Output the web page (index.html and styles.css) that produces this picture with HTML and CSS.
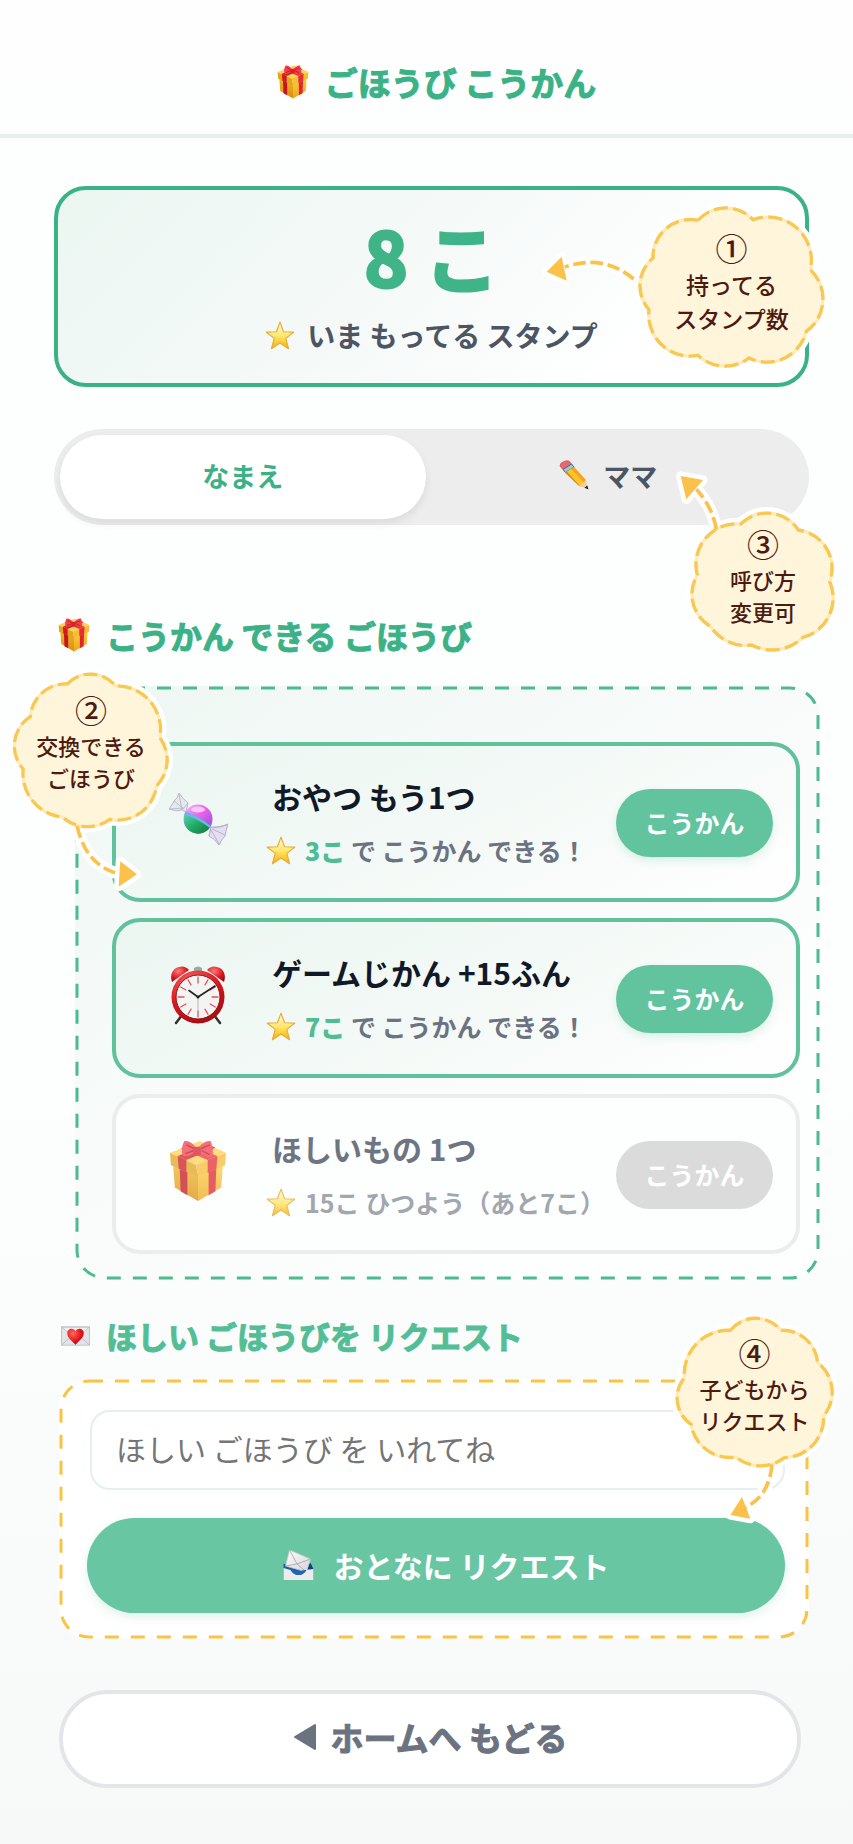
FILE: index.html
```html
<!DOCTYPE html>
<html lang="ja">
<head>
<meta charset="utf-8">
<meta name="viewport" content="width=device-width, initial-scale=1">
<title>ごほうび こうかん</title>
<link rel="stylesheet" href="styles.css">
</head>
<body>
<svg class="defs" aria-hidden="true">
  <defs>
    <linearGradient id="gold" x1="0" y1="0" x2="0" y2="1"><stop offset="0" stop-color="#fffbd8"/><stop offset=".5" stop-color="#ffe96e"/><stop offset="1" stop-color="#f8b000"/></linearGradient>
    <linearGradient id="boxL" x1="0" y1="0" x2="0" y2="1"><stop offset="0" stop-color="#f0b92b"/><stop offset="1" stop-color="#d98f10"/></linearGradient>
    <linearGradient id="boxR" x1="0" y1="0" x2="0" y2="1"><stop offset="0" stop-color="#ffd347"/><stop offset="1" stop-color="#eea51b"/></linearGradient>
    <linearGradient id="candyTop" x1="0" y1="0" x2="1" y2="1"><stop offset="0" stop-color="#ffb6ff"/><stop offset=".45" stop-color="#ec62ea"/><stop offset="1" stop-color="#7b4be0"/></linearGradient>
    <linearGradient id="candyLow" x1="0" y1="0" x2="1" y2="1"><stop offset="0" stop-color="#5fd6c8"/><stop offset=".5" stop-color="#1fae62"/><stop offset="1" stop-color="#18713f"/></linearGradient>
    <radialGradient id="bell" cx=".4" cy=".3" r=".8"><stop offset="0" stop-color="#ff7a7a"/><stop offset=".6" stop-color="#d9161c"/><stop offset="1" stop-color="#8e0a10"/></radialGradient>
    <linearGradient id="paper" x1="0" y1="0" x2="1" y2="1"><stop offset="0" stop-color="#ffffff"/><stop offset="1" stop-color="#d3d3d6"/></linearGradient>
    <radialGradient id="heart" cx=".35" cy=".3" r=".8"><stop offset="0" stop-color="#ff6a5e"/><stop offset=".6" stop-color="#e2141a"/><stop offset="1" stop-color="#a90a12"/></radialGradient>
    <symbol id="gift" viewBox="0 0 60 64">
      <path d="M4 22 30 34V63L6 49Z" fill="url(#boxL)"/>
      <path d="M56 22 30 34V63L54 49Z" fill="url(#boxR)"/>
      <path d="M11 26 19 30V57L12 53Z" fill="#c5161f"/><path d="M49 26 41 30V57L48 53Z" fill="#e2252d"/>
      <path d="M1 13 28 25 30 38 2 26Z" fill="#e3a51f"/><path d="M59 13 28 25 30 38 58 26Z" fill="#f7bd38"/>
      <path d="M1 13 32 1 59 13 28 26Z" fill="#ffd257"/>
      <path d="M9 16.500 18 20.500V33L10 29.500Z" fill="#cf1a23"/><path d="M50 16.500 40 20.500V34L49 30Z" fill="#e62d34"/>
      <path d="M9 16.500 40 4 48 8 18 20.500Z" fill="#d51f28"/><path d="M50 16.500 21 5 12 8.500 40 20.500Z" fill="#e8333a"/>
      <path d="M27 12C23 16 18 18 14 16 13 12 13 6 16 1 20 0 26 4 28 8Z" fill="#f2404a"/>
      <path d="M31 12C35 16 40 19 45 17 46 12 45 6 43 1 39 0 33 4 30 8Z" fill="#f2404a"/>
      <path d="M18 5 26 9M42 5 33 9M17 14 25 11M42 15 34 11" stroke="#b51621" stroke-width="1.500" fill="none"/>
      <rect x="25" y="7" width="8" height="9" rx="3" fill="#d81f2a"/>
    </symbol>
    <symbol id="star" viewBox="0 0 28 27">
      <path d="M14 1 17.300 10 26.800 10.400 19.400 16.200 22 25.800 14 20.400 6 25.800 8.600 16.200 1.200 10.400 10.700 10Z" fill="url(#gold)" stroke="#e9ab3a" stroke-width="1.100" stroke-linejoin="round"/>
    </symbol>
    <path id="cloud-stamps" d="M235 92A112 112 0 0 1 400 90A130 130 0 0 1 572 240A120 120 0 0 1 560 425A122 122 0 0 1 388 505A118 118 0 0 1 235 497A124 124 0 0 1 88 360A108 108 0 0 1 100 205A112 112 0 0 1 235 92Z"/>
    <path id="cloud-name" d="M245 222A112 112 0 0 1 418 240A116 116 0 0 1 512 395A122 122 0 0 1 432 562A132 132 0 0 1 278 585A125 125 0 0 1 155 530A112 112 0 0 1 115 375A122 122 0 0 1 245 222Z"/>
    <path id="cloud-rewards" d="M205 98A98 98 0 0 1 352 104A134 134 0 0 1 488 262A115 115 0 0 1 478 410A120 120 0 0 1 335 512A115 115 0 0 1 190 505A134 134 0 0 1 70 358A106 106 0 0 1 92 198A108 108 0 0 1 205 98Z"/>
    <path id="cloud-request" d="M268 118A98 98 0 0 1 420 118A105 105 0 0 1 530 215A112 112 0 0 1 548 375A120 120 0 0 1 430 500A115 115 0 0 1 285 498A118 118 0 0 1 150 400A96 96 0 0 1 130 260A132 132 0 0 1 268 118Z"/>
  </defs>
</svg>

<header class="header">
  <svg class="icon-gift" aria-hidden="true"><use href="#gift"/></svg>
  <h1>ごほうび こうかん</h1>
</header>

<main class="main">
  <section class="balance">
    <p class="balance-count">8 こ</p>
    <p class="balance-label"><svg class="icon-star" aria-hidden="true"><use href="#star"/></svg>いま もってる スタンプ</p>
    <div class="callout callout-stamps">
      <svg class="callout-art" viewBox="52 52 567 483" aria-hidden="true">
        <g class="halo"><path d="M42 268Q-48 192-165 232"/><path d="M-219 246-174 201-159 273Z"/></g>
        <use class="cloud" href="#cloud-stamps"/><use class="cloud-base" href="#cloud-stamps"/><use class="cloud-edge" href="#cloud-stamps"/>
        <path class="shaft" d="M42 268Q-48 192-165 232"/><path class="tip" d="M-219 246-174 201-159 273Z"/>
      </svg>
      <p class="callout-text"><span class="callout-no">①</span>持ってる<br>スタンプ数</p>
    </div>
  </section>

  <div class="toggle">
    <button class="toggle-item is-active" type="button">なまえ</button>
    <button class="toggle-item" type="button">
      <svg class="icon-pencil" viewBox="0 0 30 30" aria-hidden="true">
        <path d="M1 6Q1 3 4 2L7 .8Q10 .5 11 2L13 5 5 10 2 7.500Z" fill="#ee6470" stroke="#b94450" stroke-width=".6"/>
        <path d="M4 9.500 12.500 4 15 7 6.500 12.500Z" fill="#8fd0dc" stroke="#39606b" stroke-width=".9"/>
        <path d="M6 12.800 9 10.800 22.500 26.500 20 26Z" fill="#e08a12"/>
        <path d="M8 11.500 12.300 8.500 25.500 23 21 26Z" fill="#fdc52c"/>
        <path d="M12 8.700 15 6.800 27 20 25 23Z" fill="#f5a51c"/>
        <path d="M20 26 27 20 29 29Z" fill="#f2cf9a"/><path d="M25.500 27.800 28.300 25.500 29.500 29.500Z" fill="#222"/>
      </svg>ママ
    </button>
    <div class="callout callout-name">
      <svg class="callout-art" viewBox="93 180 438 423" aria-hidden="true">
        <g class="halo"><path d="M172 238Q160 170 112 118"/><path d="M65 78 132 90 82 148Z"/></g>
        <use class="cloud" href="#cloud-name"/><use class="cloud-base" href="#cloud-name"/><use class="cloud-edge" href="#cloud-name"/>
        <path class="shaft" d="M172 238Q160 170 112 118"/><path class="tip" d="M65 78 132 90 82 148Z"/>
      </svg>
      <p class="callout-text"><span class="callout-no">③</span>呼び方<br>変更可</p>
    </div>
  </div>

  <h2 class="heading"><svg class="icon-gift" aria-hidden="true"><use href="#gift"/></svg>こうかん できる ごほうび</h2>

  <section class="rewards">
    <svg class="frame frame-green" aria-hidden="true"><rect width="100%" height="100%" rx="28"/></svg>
    <article class="reward">
      <div class="reward-icon">
        <svg class="icon-candy" viewBox="0 0 60 54" aria-hidden="true">
          <path d="M11 1Q15 7 20 11L18 20 14 18Q8 20 1 17 4 13 6 9Q10 6 11 1Z" fill="#e6e8ee" stroke="#a9adb9" stroke-width=".8"/>
          <path d="M11 2 14 18M6 9 16 17M2 17 16 16M20 11 15 17" stroke="#b5b9c6" stroke-width=".9" fill="none"/>
          <path d="M43 35 46 35Q52 36 60 32 58 38 57 44 53 48 51 53 47 47 41 44Z" fill="#e3dff0" stroke="#a4a0b6" stroke-width=".8"/>
          <path d="M43 38 51 52M44 37 57 43M45 36 59 33M43 35 41 44" stroke="#b4acc9" stroke-width=".9" fill="none"/>
          <circle cx="30" cy="27" r="14.500" fill="url(#candyTop)"/>
          <path d="M17.500 19.500Q31 24 43 34A14.500 14.500 0 0 1 16 30Q15.500 24 17.500 19.500Z" fill="url(#candyLow)"/>
          <path d="M17.500 19.500Q31 24 43 34L42 36Q30 27 16.300 22.500Z" fill="#70b5ea"/>
          <ellipse cx="30" cy="17.500" rx="7" ry="3" fill="#ffd9ff" opacity=".8"/>
        </svg>
      </div>
      <div class="reward-body">
        <h3>おやつ もう1つ</h3>
        <p><svg class="icon-star" aria-hidden="true"><use href="#star"/></svg><span><b>3こ</b> で こうかん できる！</span></p>
      </div>
      <button class="swap" type="button">こうかん</button>
    </article>
    <article class="reward">
      <div class="reward-icon">
        <svg class="icon-clock" viewBox="0 0 56 60" aria-hidden="true">
          <path d="M12 50 6 58M44 50 50 58" stroke="#333" stroke-width="2.500" stroke-linecap="round"/>
          <path d="M24 3Q28 0 32 3V6H24Z" fill="#9fa8a8"/>
          <path d="M2 17Q-1 8 6 3 14-1 19 5Z" fill="url(#bell)"/><path d="M54 17Q57 8 50 3 42-1 37 5Z" fill="url(#bell)"/>
          <circle cx="28" cy="32" r="26.500" fill="url(#bell)"/><circle cx="28" cy="32" r="22" fill="#f4f4f3" stroke="#8b1115" stroke-width="1"/>
          <g stroke="#e05360" stroke-width="1.300" stroke-linecap="round"><path d="M28 12V18M28 46V52M8 32H14M42 32H48M18 14.700 21 19.900M35 44.100 38 49.300M38 14.700 35 19.900M21 44.100 18 49.300M10.700 22 15.900 25M40.100 39 45.300 42M45.300 22 40.100 25M15.900 39 10.700 42"/></g>
          <path d="M28 32 45 21M28 32 19 25.500" stroke="#222" stroke-width="1.600" stroke-linecap="round"/><path d="M28 32V46" stroke="#aaa" stroke-width=".8"/><circle cx="28" cy="32" r="1.500" fill="#222"/>
        </svg>
      </div>
      <div class="reward-body">
        <h3>ゲームじかん +15ふん</h3>
        <p><svg class="icon-star" aria-hidden="true"><use href="#star"/></svg><span><b>7こ</b> で こうかん できる！</span></p>
      </div>
      <button class="swap" type="button">こうかん</button>
    </article>
    <article class="reward is-locked">
      <div class="reward-icon"><svg class="icon-present" aria-hidden="true"><use href="#gift"/></svg></div>
      <div class="reward-body">
        <h3>ほしいもの 1つ</h3>
        <p><svg class="icon-star" aria-hidden="true"><use href="#star"/></svg><span>15こ ひつよう（あと7こ）</span></p>
      </div>
      <button class="swap" type="button" disabled>こうかん</button>
    </article>
    <div class="callout callout-rewards">
      <svg class="callout-art" viewBox="39 60 477 480" aria-hidden="true">
        <g class="halo"><path d="M235 532Q262 655 365 679"/><path d="M418 680 367 640 362 718Z"/></g>
        <use class="cloud" href="#cloud-rewards"/><use class="cloud-base" href="#cloud-rewards"/><use class="cloud-edge" href="#cloud-rewards"/>
        <path class="shaft" d="M235 532Q262 655 365 679"/><path class="tip" d="M418 680 367 640 362 718Z"/>
      </svg>
      <p class="callout-text"><span class="callout-no">②</span>交換できる<br>ごほうび</p>
    </div>
  </section>

  <h2 class="heading heading-request">
    <svg class="icon-letter" viewBox="0 0 30 20" aria-hidden="true">
      <rect x=".5" y=".5" width="29" height="19" fill="#e4e4e6" stroke="#c3c3c7"/>
      <path d="M1 19 12 9M29 19 18 9" stroke="#bdbdc2" fill="none"/><path d="M1 1 15 13 29 1Z" fill="#efeff0" stroke="#bdbdc2" stroke-width=".8"/>
      <path d="M15 19C9 13.500 6.500 11 6.500 7 6.500 2 12.500.8 15 5 17.500.8 23.500 2 23.500 7 23.500 11 21 13.500 15 19Z" fill="url(#heart)"/>
    </svg><label for="wish">ほしい ごほうびを リクエスト</label>
  </h2>

  <form class="request">
    <svg class="frame frame-yellow" aria-hidden="true"><rect width="100%" height="100%" rx="28"/></svg>
    <input class="wish" id="wish" type="text" placeholder="ほしい ごほうび を いれてね">
    <button class="send" type="button">
      <svg class="icon-mail" viewBox="0 0 30 30" aria-hidden="true">
        <path d="M0 14H3L15 18 27 13 30 19V29.500H0Z" fill="#1d5fae"/><path d="M22 19 27 13 29.500 19Z" fill="#153b80"/>
        <path d="M6 0 27 9 23 22 2 16Z" fill="url(#paper)" stroke="#c5c5c9" stroke-width=".7"/>
        <path d="M6 0 13.500 14 27 9M13.500 14 2 16M13.500 14 23 22" fill="none" stroke="#aaaab0" stroke-width=".9"/>
        <path d="M0 18 7 20Q10 25 15 25 20 25 23 20L30 19V30H0Z" fill="#ececef"/><path d="M7 19.500Q10 25 15 25 20 25 23 20L21 20Q15 22.500 7 19.500Z" fill="#1d67b8"/>
      </svg>おとなに リクエスト
    </button>
    <div class="callout callout-request">
      <svg class="callout-art" viewBox="102 78 477 453" aria-hidden="true">
        <g class="halo"><path d="M393 520Q385 615 312 650"/><path d="M268 672 303 618 328 683Z"/></g>
        <use class="cloud" href="#cloud-request"/><use class="cloud-base" href="#cloud-request"/><use class="cloud-edge" href="#cloud-request"/>
        <path class="shaft" d="M393 520Q385 615 312 650"/><path class="tip" d="M268 672 303 618 328 683Z"/>
      </svg>
      <p class="callout-text"><span class="callout-no">④</span>子どもから<br>リクエスト</p>
    </div>
  </form>

  <a class="home" href="#"><svg class="icon-back" viewBox="0 0 24 28" aria-hidden="true"><path d="M2 14 22 2V26Z"/></svg>ホームへ もどる</a>
</main>
</body>
</html>
```

FILE: styles.css
```css
* { box-sizing: border-box; }

body {
  margin: 0;
  background: linear-gradient(#fefefe 0%, #fdfefe 55%, #f7f9f9 100%);
  color: #4b5563;
  font-family: "Noto Sans CJK JP", sans-serif;
  font-weight: 700;
  overflow-x: hidden;
}

h1, h2, h3, p { margin: 0; font-weight: 700; }
button, input { font-family: inherit; }
button { border: 0; cursor: pointer; font-weight: 700; }
svg { display: block; flex: none; }
.defs { position: absolute; width: 0; height: 0; }

.icon-gift { width: 32px; height: 34px; }
.icon-star { width: 30px; height: 29px; }
.icon-pencil { width: 30px; height: 30px; }

.header {
  display: flex;
  align-items: center;
  justify-content: center;
  gap: 16px;
  padding: 58px 0 28px 20px;
  border-bottom: 4px solid #e6efed;
}
.header h1 { font-size: 33px; line-height: 48px; color: #3bb286; -webkit-text-stroke: 1px; }

.main { padding: 48px 44px 57px 54px; }

/* stamp balance */
.balance {
  position: relative;
  padding: 25px 16px 28px;
  border: 4px solid #3bb286;
  border-radius: 32px;
  background: linear-gradient(135deg, #ebf6f1 0%, #f6faf9 50%, #fff 80%);
  text-align: center;
}
.balance-count { font-size: 74px; line-height: 80px; color: #3fb488; -webkit-text-stroke: 3px; }
.balance-label {
  display: flex;
  align-items: center;
  justify-content: center;
  gap: 12px;
  margin-top: 20px;
  font-size: 28px;
  line-height: 40px;
}

/* name switch */
.toggle {
  position: relative;
  display: grid;
  grid-template-columns: 1fr 1fr;
  margin-top: 42px;
  padding: 6px 18px 6px 6px;
  border-radius: 48px;
  background: #ededed;
}
.toggle-item {
  display: flex;
  align-items: center;
  justify-content: center;
  gap: 14px;
  height: 84px;
  padding: 0 0 4px;
  border-radius: 42px;
  background: none;
  color: #4b5563;
  font-size: 27px;
}
.toggle-item.is-active { background: #fff; color: #3bb286; box-shadow: 0 4px 8px rgba(0, 0, 0, .08); }

.heading {
  display: flex;
  align-items: center;
  gap: 16px;
  margin: 88px 0 29px 4px;
  font-size: 32px;
  line-height: 44px;
  color: #3bb286;
  -webkit-text-stroke: 1px;
}
.heading-request { margin: 34px 0 21px 7px; font-size: 31px; color: #53be95; }
.icon-letter { width: 29px; height: 20px; }

.frame {
  position: absolute;
  top: 2px;
  left: 2px;
  width: calc(100% - 4px);
  height: calc(100% - 4px);
  overflow: visible;
  pointer-events: none;
}
.frame rect { fill: none; stroke-width: 3px; stroke-dasharray: 14 12; }
.frame-green rect { stroke: #4dba90; }
.frame-yellow rect { stroke: #fac344; }

/* reward list */
.rewards {
  position: relative;
  display: grid;
  gap: 16px;
  margin: 0 -11px 0 21px;
  padding: 56px 20px 26px 37px;
  border-radius: 30px;
  background: linear-gradient(145deg, #eef7f3 0%, #f8fbfa 45%, #fdfefe 80%);
}
.reward {
  display: grid;
  grid-template-columns: 110px 1fr auto;
  align-items: center;
  min-height: 160px;
  padding: 0 23px 0 28px;
  border: 4px solid #60c19c;
  border-radius: 28px;
  background: linear-gradient(155deg, #ebf6f1 0%, #f3f9f6 50%, #fefefe 95%);
}
.reward-icon { display: flex; justify-content: center; padding: 0 2px 6px 0; }
.icon-candy { width: 60px; height: 54px; }
.icon-clock { width: 56px; height: 60px; }
.icon-present { width: 58px; height: 62px; }
.reward-body { padding-left: 12px; white-space: nowrap; }
.reward-body h3 { padding-left: 6px; font-size: 30px; line-height: 40px; color: #111827; }
.reward-body p {
  display: flex;
  align-items: center;
  gap: 9px;
  margin-top: 16px;
  font-size: 25px;
  line-height: 36px;
  color: #6b7280;
}
.reward-body b { color: #4fbd93; }
.swap {
  width: 157px;
  height: 68px;
  margin-top: 2px;
  padding: 0 0 2px;
  border-radius: 34px;
  background: #62c49e;
  box-shadow: 0 4px 8px rgba(59, 178, 134, .16);
  color: #fff;
  font-size: 25px;
}
.is-locked { border-color: #ebecec; background: #fdfefe; }
.is-locked .icon-present { opacity: .75; }
.is-locked h3 { color: #6d7482; }
.is-locked p { color: #a2a6af; }
.is-locked .icon-star { opacity: .8; }
.is-locked .swap { background: #dbdbdb; box-shadow: none; cursor: default; }

/* request form */
.request {
  position: relative;
  display: grid;
  gap: 28px;
  margin: 0 0 0 5px;
  padding: 31px 24px 26px 28px;
  border-radius: 30px;
  background: #fff;
}
.wish {
  margin-left: 3px;
  height: 80px;
  padding: 0 24px 4px;
  border: 2px solid #e5efed;
  border-radius: 20px;
  background: #fff;
  color: #4b5563;
  font-size: 30px;
}
.wish::placeholder { color: #757575; opacity: 1; }
.send {
  display: flex;
  align-items: center;
  justify-content: center;
  gap: 20px;
  height: 95px;
  padding: 0 0 2px 20px;
  border-radius: 48px;
  background: #68c6a2;
  box-shadow: 0 4px 10px rgba(59, 178, 134, .16);
  color: #fff;
  font-size: 30px;
}
.icon-mail { width: 31px; height: 30px; }

.home {
  display: flex;
  align-items: center;
  justify-content: center;
  gap: 14px;
  height: 98px;
  margin: 51px 8px 0 5px;
  padding-bottom: 4px;
  border: 4px solid #e3e5e8;
  border-radius: 49px;
  background: #fff;
  color: #6b7280;
  font-size: 33px;
  text-decoration: none;
  -webkit-text-stroke: 1px;
}
.icon-back { width: 24px; height: 28px; fill: #6b7280; stroke: #6b7280; stroke-width: 2; stroke-linejoin: round; }

/* callout clouds */
.callout { position: absolute; z-index: 2; pointer-events: none; }
.callout-art { position: absolute; inset: 0; width: 100%; height: 100%; overflow: visible; }
.halo path { fill: none; stroke: #fff; stroke-width: 36; stroke-linejoin: round; stroke-linecap: round; }
.halo path + path { stroke-width: 28; }
.cloud { fill: #fff5da; stroke: #fff; stroke-width: 36; stroke-linejoin: round; paint-order: stroke; }
.cloud-base { fill: none; stroke: #fdeab8; stroke-width: 9; }
.cloud-edge { fill: none; stroke: #f8c850; stroke-width: 10; stroke-dasharray: 42 16; }
.shaft { fill: none; stroke: #fcc14a; stroke-width: 11; stroke-dasharray: 38 14; }
.tip { fill: #fcc14a; }
.callout-text {
  position: relative;
  color: #4d1a10;
  font-size: 22px;
  line-height: 32px;
  font-weight: 500;
  text-align: center;
  white-space: nowrap;
}
.callout-no { display: block; font-size: 32px; line-height: 40px; }
.callout-stamps { top: 17px; right: -21px; width: 189px; height: 161px; padding-top: 20px; }
.callout-stamps .callout-text { font-size: 23px; line-height: 34px; }
.callout-stamps .callout-no { line-height: 40px; }
.callout-name { top: 81px; right: -27px; width: 146px; height: 141px; padding-top: 13px; }
.callout-rewards { top: -16px; left: -62px; width: 156px; height: 160px; padding-top: 19px; }
.callout-request { top: -62px; right: -25px; width: 159px; height: 151px; padding-top: 15px; }
```
